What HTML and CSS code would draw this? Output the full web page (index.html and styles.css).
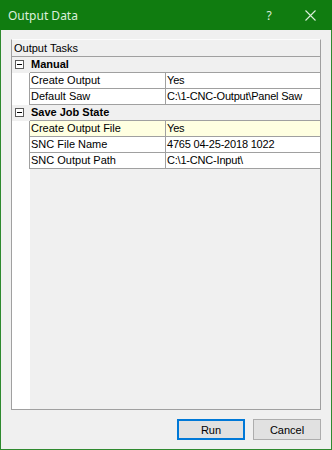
FILE: index.html
```html
<!DOCTYPE html>
<html>
<head>
    <title>Output Data</title>
    <link rel="stylesheet" href="styles.css">
</head>
<body>
    <div class="window">
        <div class="titlebar">
            <span class="title">Output Data</span>
            <span class="help">?</span>
            <span class="close">
                <svg width="11" height="11" viewBox="0 0 11 11">
                    <path d="M0.5 0.5 L10.5 10.5 M10.5 0.5 L0.5 10.5" stroke="#dcefdc" stroke-width="1.1" fill="none"/>
                </svg>
            </span>
        </div>
        <div class="client">
            <div class="grid-panel">
                <div class="panel-head">Output Tasks</div>
                <div class="grid">
                    <div class="row cat">
                        <span class="gutter"><span class="expander"></span></span>
                        <span class="cat-name">Manual</span>
                    </div>
                    <div class="row">
                        <span class="gutter"></span>
                        <span class="name">Create Output</span>
                        <span class="value">Yes</span>
                    </div>
                    <div class="row">
                        <span class="gutter"></span>
                        <span class="name">Default Saw</span>
                        <span class="value">C:\1-CNC-Output\Panel Saw</span>
                    </div>
                    <div class="row cat">
                        <span class="gutter"><span class="expander"></span></span>
                        <span class="cat-name">Save Job State</span>
                    </div>
                    <div class="row selected">
                        <span class="gutter"></span>
                        <span class="name">Create Output File</span>
                        <span class="value">Yes</span>
                    </div>
                    <div class="row">
                        <span class="gutter"></span>
                        <span class="name">SNC File Name</span>
                        <span class="value">4765 04-25-2018 1022</span>
                    </div>
                    <div class="row">
                        <span class="gutter"></span>
                        <span class="name">SNC Output Path</span>
                        <span class="value">C:\1-CNC-Input\</span>
                    </div>
                    <div class="grid-fill">
                        <span class="gutter"></span>
                    </div>
                </div>
            </div>
            <div class="buttons">
                <button class="btn default">Run</button>
                <button class="btn">Cancel</button>
            </div>
        </div>
    </div>
</body>
</html>
```

FILE: styles.css
```css
body {
    margin: 0;
    font-family: "Liberation Sans", Arial, sans-serif;
    font-size: 11px;
    color: #000;
    background: #f0f0f0;
}
.window {
    width: 332px;
    height: 450px;
    display: flex;
    flex-direction: column;
    background: #f0f0f0;
}
.titlebar {
    height: 30px;
    background: #107c10; /* accent green */
    display: flex;
    align-items: center;
    color: #dcefdc;
}
.title {
    font-family: "Noto Sans", "Open Sans", sans-serif;
    font-size: 12px;
    padding-left: 8px;
    flex: 1;
}
.help {
    font-family: "Noto Sans", sans-serif;
    font-size: 12px;
    width: 38px;
    text-align: center;
}
.close {
    width: 44px;
    display: flex;
    justify-content: center;
}
.client {
    flex: 1;
    border: 1px solid #2f8a2f;
    border-top: none;
    padding: 9px 10px 0 10px;
}
.grid-panel {
    width: 310px;
    height: 371px;
    box-sizing: border-box;
    border: 1px solid #a0a0a0;
    border-top-color: #fcfcfc;
    display: flex;
    flex-direction: column;
}
.panel-head {
    height: 16px;
    line-height: 16px;
    padding-left: 2px;
}
.grid {
    flex: 1;
    border-top: 1px solid #a0a0a0;
    display: flex;
    flex-direction: column;
}
.row {
    display: grid;
    grid-template-columns: 18px 136px 1fr;
    height: 16px;
}
.gutter {
    background: #fff;
    border-right: 1px solid #a0a0a0;
    position: relative;
}
.name, .value {
    border-bottom: 1px solid #a0a0a0;
    background: #fff;
    line-height: 15px;
    padding-left: 1px;
    white-space: nowrap;
    overflow: hidden;
}
.name {
    border-right: 1px solid #a0a0a0;
}
.value {
    letter-spacing: -0.2px;
}
.selected .name, .selected .value {
    background: #ffffe1;
}
.cat .gutter {
    background: #f0f0f0;
    border-right: none;
}
.cat-name {
    grid-column: 2 / 4;
    background: #f0f0f0;
    border-bottom: 1px solid #a0a0a0;
    font-weight: bold;
    line-height: 15px;
    padding-left: 1px;
}
.expander {
    position: absolute;
    left: 3px;
    top: 3px;
    width: 7px;
    height: 7px;
    border: 1px solid #5a5a5a;
    background: #fff;
}
.expander::after {
    content: "";
    position: absolute;
    left: 1px;
    top: 3px;
    width: 5px;
    height: 1px;
    background: #000;
}
.grid-fill {
    flex: 1;
    display: grid;
    grid-template-columns: 18px 1fr;
}
.grid-fill .gutter {
    border-right: none;
}
.buttons {
    display: flex;
    justify-content: flex-end;
    gap: 8px;
    margin-top: 9px;
}
.btn {
    width: 68px;
    height: 21px;
    font-family: "Liberation Sans", Arial, sans-serif;
    font-size: 11px;
    background: #e1e1e1;
    border: 1px solid #adadad;
    padding: 0;
    color: #000;
}
.btn.default {
    border-color: #0078d7;
    box-shadow: inset 0 0 0 1px #0078d7;
}
```
